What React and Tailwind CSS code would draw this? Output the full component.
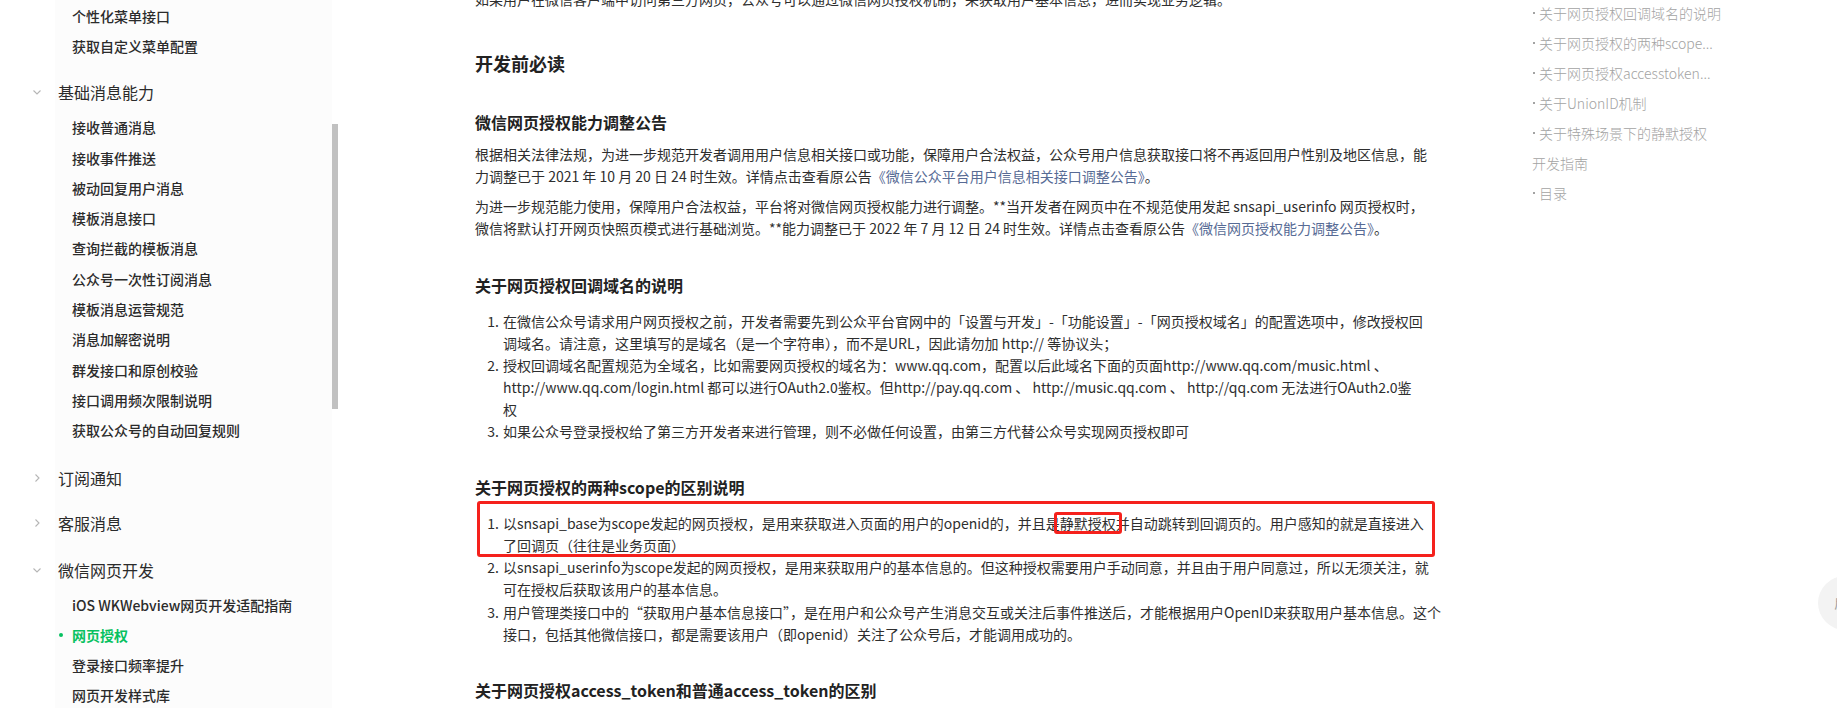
const FONT = "font-['Noto_Sans_CJK_SC','Microsoft_YaHei',sans-serif]"

function Chevron({ open }) {
  return (
    <svg width="10" height="10" viewBox="0 0 10 10" className="shrink-0">
      {open ? (
        <path d="M1.5 3.5 L5 7 L8.5 3.5" fill="none" stroke="#b5b5b5" strokeWidth="1.1" />
      ) : (
        <path d="M3.5 1.5 L7 5 L3.5 8.5" fill="none" stroke="#b5b5b5" strokeWidth="1.1" />
      )}
    </svg>
  )
}

function SubItem({ children, active }) {
  if (active) {
    return (
      <div className="flex items-center h-[30.3px] pl-[59px] text-[14px] font-bold text-[#07c160]">
        <span className="w-[4px] h-[4px] rounded-full bg-[#07c160]" />
        <span className="ml-[9px]">{children}</span>
      </div>
    )
  }
  return (
    <div className="flex items-center h-[30.3px] pl-[72px] text-[14px] font-medium text-[#2b2b2b] whitespace-nowrap">
      {children}
    </div>
  )
}

function Group({ title, open, className = '' }) {
  return (
    <div className={`flex items-center h-[32px] pl-[32px] text-[16px] text-[#2b2b2b] ${className}`}>
      <Chevron open={open} />
      <span className="ml-[16px]">{title}</span>
    </div>
  )
}

function Line({ children }) {
  return <div className="h-[22px] leading-[22px] whitespace-nowrap">{children}</div>
}

function Item({ n, children, className = '' }) {
  return (
    <div className={`flex ${className}`}>
      <span className="w-[28px] shrink-0 text-right pr-[4px] leading-[22px]">{n}.</span>
      <div>{children}</div>
    </div>
  )
}

const Link = ({ children }) => <span className="text-[#576b95]">{children}</span>

export default function App() {
  const basics = ['接收普通消息', '接收事件推送', '被动回复用户消息', '模板消息接口', '查询拦截的模板消息', '公众号一次性订阅消息', '模板消息运营规范', '消息加解密说明', '群发接口和原创校验', '接口调用频次限制说明', '获取公众号的自动回复规则']
  const toc = [
    { t: '关于网页授权回调域名的说明', dot: true },
    { t: '关于网页授权的两种scope...', dot: true },
    { t: '关于网页授权accesstoken...', dot: true },
    { t: '关于UnionID机制', dot: true },
    { t: '关于特殊场景下的静默授权', dot: true },
    { t: '开发指南' },
    { t: '目录', dot: true },
  ]

  return (
    <div className={`w-[1837px] h-[708px] overflow-hidden relative bg-white flex ${FONT}`}>
      {/* LEFT NAV */}
      <aside className="w-[332px] shrink-0 h-full bg-[linear-gradient(to_right,#ffffff_55px,#fcfcfc_55px)]">
        <div className="pt-[1px]">
          <SubItem>个性化菜单接口</SubItem>
          <SubItem>获取自定义菜单配置</SubItem>
        </div>
        <Group title="基础消息能力" open className="mt-[14px]" />
        <div className="mt-[5px]">
          {basics.map((b) => <SubItem key={b}>{b}</SubItem>)}
        </div>
        <Group title="订阅通知" className="mt-[16px]" />
        <Group title="客服消息" className="mt-[13px]" />
        <Group title="微信网页开发" open className="mt-[15px]" />
        <div className="mt-[4px]">
          <SubItem>iOS WKWebview网页开发适配指南</SubItem>
          <SubItem active>网页授权</SubItem>
          <SubItem>登录接口频率提升</SubItem>
          <SubItem>网页开发样式库</SubItem>
        </div>
      </aside>
      <div className="w-[6px] shrink-0">
        <div className="mt-[124px] h-[285px] bg-[#c1c1c1]" />
      </div>

      {/* MAIN */}
      <main className="w-[1194px] shrink-0 pl-[137px] text-[14px] text-[#2e2e2e] -mt-[12px]">
        <Line>如果用户在微信客户端中访问第三方网页，公众号可以通过微信网页授权机制，来获取用户基本信息，进而实现业务逻辑。</Line>

        <h1 className="mt-[39px] h-[28px] leading-[28px] text-[18px] font-bold text-[#222]">开发前必读</h1>

        <h2 className="mt-[33px] h-[24px] leading-[24px] text-[16px] font-bold text-[#222]">微信网页授权能力调整公告</h2>
        <div className="mt-[9px]">
          <Line>根据相关法律法规，为进一步规范开发者调用用户信息相关接口或功能，保障用户合法权益，公众号用户信息获取接口将不再返回用户性别及地区信息，能</Line>
          <Line>力调整已于 2021 年 10 月 20 日 24 时生效。详情点击查看原公告<Link>《微信公众平台用户信息相关接口调整公告》</Link>。</Line>
        </div>
        <div className="mt-[8px]">
          <Line>为进一步规范能力使用，保障用户合法权益，平台将对微信网页授权能力进行调整。**当开发者在网页中在不规范使用发起 snsapi_userinfo 网页授权时，</Line>
          <Line>微信将默认打开网页快照页模式进行基础浏览。**能力调整已于 2022 年 7 月 12 日 24 时生效。详情点击查看原公告<Link>《微信网页授权能力调整公告》</Link>。</Line>
        </div>

        <h2 className="mt-[34px] h-[24px] leading-[24px] text-[16px] font-bold text-[#222]">关于网页授权回调域名的说明</h2>
        <div className="mt-[13px]">
          <Item n={1}>
            <Line>在微信公众号请求用户网页授权之前，开发者需要先到公众平台官网中的「设置与开发」-「功能设置」-「网页授权域名」的配置选项中，修改授权回</Line>
            <Line>调域名。请注意，这里填写的是域名（是一个字符串），而不是URL，因此请勿加 http:// 等协议头；</Line>
          </Item>
          <Item n={2}>
            <Line>授权回调域名配置规范为全域名，比如需要网页授权的域名为：www.qq.com，配置以后此域名下面的页面http://www.qq.com/music.html 、</Line>
            <Line>http://www.qq.com/login.html 都可以进行OAuth2.0鉴权。但http://pay.qq.com 、 http://music.qq.com 、 http://qq.com 无法进行OAuth2.0鉴</Line>
            <Line>权</Line>
          </Item>
          <Item n={3}>
            <Line>如果公众号登录授权给了第三方开发者来进行管理，则不必做任何设置，由第三方代替公众号实现网页授权即可</Line>
          </Item>
        </div>

        <h2 className="mt-[33px] h-[24px] leading-[24px] text-[16px] font-bold text-[#222]">关于网页授权的两种scope的区别说明</h2>
        <div className="mt-[13px]">
          <div className="relative">
            <Item n={1}>
              <Line>
                以snsapi_base为scope发起的网页授权，是用来获取进入页面的用户的openid的，并且是
                <span className="relative">
                  静默授权
                  <span className="absolute -left-[6px] -right-[6px] -top-[1px] -bottom-[1px] border-[3px] border-[#f5211c] rounded-[3px]" />
                </span>
                并自动跳转到回调页的。用户感知的就是直接进入
              </Line>
              <Line>了回调页（往往是业务页面）</Line>
            </Item>
            <div className="absolute left-[2px] top-[-11px] w-[958px] h-[56px] border-[3px] border-[#f5211c] rounded-[3px] pointer-events-none" />
          </div>
          <Item n={2}>
            <Line>以snsapi_userinfo为scope发起的网页授权，是用来获取用户的基本信息的。但这种授权需要用户手动同意，并且由于用户同意过，所以无须关注，就</Line>
            <Line>可在授权后获取该用户的基本信息。</Line>
          </Item>
          <Item n={3} className="mt-[1px]">
            <Line>用户管理类接口中的“获取用户基本信息接口”，是在用户和公众号产生消息交互或关注后事件推送后，才能根据用户OpenID来获取用户基本信息。这个</Line>
            <Line>接口，包括其他微信接口，都是需要该用户（即openid）关注了公众号后，才能调用成功的。</Line>
          </Item>
        </div>

        <h2 className="mt-[33px] h-[24px] leading-[24px] text-[16px] font-bold text-[#222]">关于网页授权access_token和普通access_token的区别</h2>
      </main>

      {/* RIGHT TOC */}
      <nav className="-mt-[2px] shrink-0 text-[14px] font-light text-[#a3a3a3]">
        {toc.map((item) => (
          <div key={item.t} className="flex items-center h-[30px] whitespace-nowrap">
            {item.dot && (
              <span className="w-[7px] shrink-0 flex items-center">
                <span className="w-[2px] h-[2px] ml-[1px] bg-[#a3a3a3]" />
              </span>
            )}
            <span>{item.t}</span>
          </div>
        ))}
      </nav>

      <div className="absolute left-[1818px] top-[576px] w-[54px] h-[54px] rounded-full bg-[#f3f3f3] flex items-center pl-[16px] text-[13px] text-[#9a9a9a] whitespace-nowrap">
        反馈
      </div>
    </div>
  )
}
